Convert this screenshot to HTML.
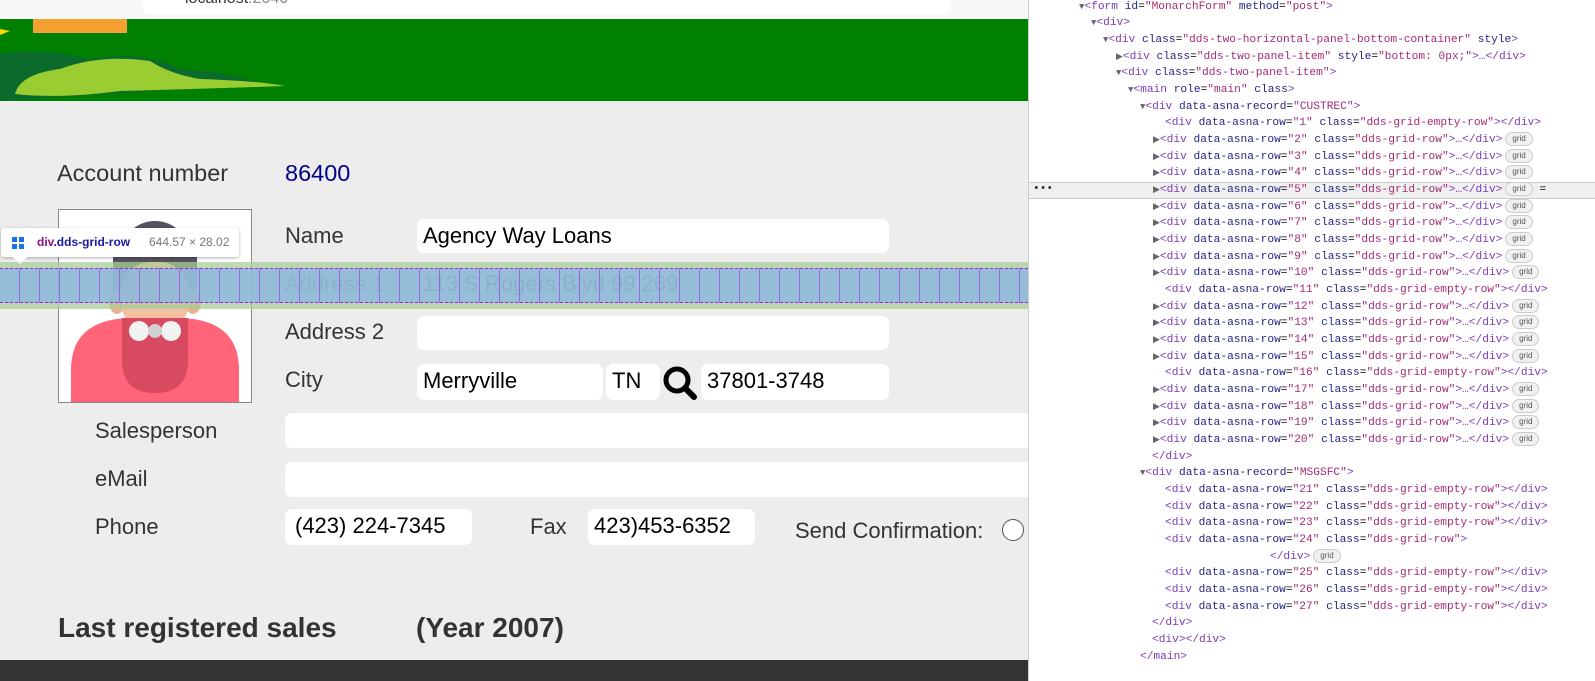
<!DOCTYPE html>
<html><head><meta charset="utf-8"><style>
*{margin:0;padding:0;box-sizing:border-box}
body{width:1595px;height:681px;overflow:hidden;background:#fff;font-family:"Liberation Sans",Arial,sans-serif;position:relative}
.a{position:absolute}
.lbl{position:absolute;font-size:22px;color:#333;line-height:26px}
.in{position:absolute;background:#fff;border-radius:7px;font-size:22px;color:#000;line-height:34px;padding-left:6px;white-space:nowrap}
#dt{position:absolute;left:1028px;top:0;width:567px;height:681px;background:#fff;border-left:1px solid #ccc;font-family:"Liberation Mono",monospace;font-size:11.2px;white-space:pre}
.l{position:absolute;height:17px;line-height:17px}
.t{color:#7b3bb5}.n{color:#252584}.v{color:#a42b72}
.tri{color:#666;font-size:9px}
.g{display:inline-block;border:1px solid #ccc;background:#f1f1f1;border-radius:8px;font-size:8px;color:#555;padding:0 6px;line-height:12px;margin-left:3px;vertical-align:middle;font-family:"Liberation Sans",sans-serif}
</style></head><body>
<div class="a" style="left:0;top:0;width:1028px;height:19px;background:#f7f7f7"></div>
<div class="a" style="left:143px;top:0;width:808px;height:14px;background:#fff;border-radius:0 0 6px 6px"></div>
<div class="a" style="left:185px;top:-10px;font-size:16px;color:#333">localhost<span style="color:#888">:2040</span></div>
<div class="a" style="left:0;top:19px;width:1028px;height:82px;background:#008000;overflow:hidden">
<svg width="300" height="82"><rect x="33" y="0" width="94" height="14" fill="#f4a030"/><path d="M0 35 Q40 28 90 40 Q140 30 180 50 Q240 55 260 65 L0 82Z" fill="#0b6b2c"/><path d="M15 75 Q20 55 60 50 Q100 35 150 42 Q170 55 200 60 Q260 62 285 67 Q200 70 120 72 Q60 80 15 75Z" fill="#9acd32"/><path d="M0 10 L10 12 L0 16Z" fill="#ffd700"/></svg></div>
<div class="a" style="left:0;top:101px;width:1028px;height:559px;background:#ededed"></div>
<div class="a" style="left:0;top:660px;width:1028px;height:21px;background:#333"></div>

<div class="lbl" style="left:57px;top:160px;font-size:23.5px">Account number</div>
<div class="lbl" style="left:285px;top:160px;font-size:23.5px;color:#00008b">86400</div>

<div class="a" style="left:58px;top:209px;width:194px;height:194px;background:#fff;border:1px solid #888;overflow:hidden">
<svg width="194" height="194"><circle cx="96" cy="46" r="35" fill="#55535e"/><rect x="54" y="46" width="84" height="40" fill="#55535e"/><ellipse cx="58" cy="92" rx="8" ry="12" fill="#e8b090"/><ellipse cx="134" cy="92" rx="8" ry="12" fill="#e8b090"/><rect x="62" y="52" width="68" height="70" rx="30" fill="#f2c0a0"/><rect x="80" y="110" width="32" height="30" fill="#ecb08a"/><path d="M12 192 L12 160 Q12 110 70 108 L122 108 Q180 110 180 160 L180 192Z" fill="#ff6478"/><path d="M63 108 L129 108 L129 150 Q129 183 96 183 Q63 183 63 150Z" fill="#d74a60"/><circle cx="80" cy="121" r="10" fill="#f2f2f2"/><circle cx="112" cy="121" r="10" fill="#f2f2f2"/><circle cx="96" cy="121" r="7" fill="#d0d0d0"/></svg></div>

<div class="lbl" style="left:285px;top:223px">Name</div>
<div class="in" style="left:417px;top:219px;width:472px;height:34px">Agency Way Loans</div>
<div class="lbl" style="left:285px;top:271px">Address 1</div>
<div class="in" style="left:417px;top:267px;width:472px;height:34px">113 S Rogers Blvd 99 269</div>
<div class="lbl" style="left:285px;top:319px">Address 2</div>
<div class="in" style="left:417px;top:316px;width:472px;height:34px"></div>
<div class="lbl" style="left:285px;top:367px">City</div>
<div class="in" style="left:417px;top:364px;width:186px;height:36px">Merryville</div>
<div class="in" style="left:606px;top:364px;width:54px;height:36px">TN</div>
<svg class="a" style="left:661px;top:364px" width="38" height="38"><circle cx="16" cy="16" r="11" fill="none" stroke="#000" stroke-width="5"/><path d="M24 24 L33 33" stroke="#000" stroke-width="6" stroke-linecap="round"/></svg>
<div class="in" style="left:701px;top:364px;width:188px;height:36px">37801-3748</div>
<div class="lbl" style="left:95px;top:418px">Salesperson</div>
<div class="in" style="left:285px;top:413px;width:760px;height:35px"></div>
<div class="lbl" style="left:95px;top:466px">eMail</div>
<div class="in" style="left:285px;top:462px;width:760px;height:35px"></div>
<div class="lbl" style="left:95px;top:514px">Phone</div>
<div class="in" style="left:285px;top:509px;width:187px;height:36px;padding-left:10px">(423) 224-7345</div>
<div class="lbl" style="left:530px;top:514px">Fax</div>
<div class="in" style="left:588px;top:509px;width:167px;height:36px">423)453-6352</div>
<div class="lbl" style="left:795px;top:518px">Send Confirmation:</div>
<div class="a" style="left:1002px;top:519px;width:22px;height:22px;border:1.5px solid #555;border-radius:50%;background:#fff"></div>
<div class="a" style="left:58px;top:612px;font-size:28px;font-weight:bold;color:#333">Last registered sales</div>
<div class="a" style="left:416px;top:612px;font-size:28px;font-weight:bold;color:#333">(Year 2007)</div>

<div class="a" style="left:0;top:262px;width:1028px;height:47px;background:rgba(170,205,150,.75)"></div>
<div class="a" style="left:0;top:268px;width:1028px;height:35px;background:rgba(140,182,228,.78);border-top:1px dashed #a020f0;border-bottom:1px dashed #a020f0;background-image:repeating-linear-gradient(90deg,transparent 0 19px,rgba(160,32,240,.55) 19px 20px)"></div>

<div class="a" style="left:1px;top:228px;width:238px;height:29px;background:#fff;border-radius:3px;box-shadow:0 1px 3px rgba(0,0,0,.3);font-size:12px;line-height:29px;white-space:nowrap">
<span style="position:absolute;left:11px;top:9px;width:12px;height:12px;background:linear-gradient(#1a73e8,#1a73e8) 0 0/5px 5px no-repeat,linear-gradient(#1a73e8,#1a73e8) 7px 0/5px 5px no-repeat,linear-gradient(#1a73e8,#1a73e8) 0 7px/5px 5px no-repeat,linear-gradient(#1a73e8,#1a73e8) 7px 7px/5px 5px no-repeat"></span>
<span style="position:absolute;left:36px;font-weight:bold;color:#881280">div<span style="color:#1a1aa6">.dds-grid-row</span></span>
<span style="position:absolute;left:148px;color:#777">644.57 × 28.02</span></div>
<div class="a" style="left:13px;top:257px;width:0;height:0;border-left:7px solid transparent;border-right:7px solid transparent;border-top:7px solid #fff"></div>

<div id="dt">
<div class="a" style="left:0;top:182px;width:567px;height:17px;background:#f0f0f0;border-top:1px solid #ccc;border-bottom:1px solid #ccc"></div>
<div class="l" style="left:4px;top:181px;color:#333">•••</div>
<div class="l" style="left:50px;top:-1px"><span class="tri">▼</span><span class="t">&lt;form </span><span class="n">id</span>=<span class="v">"MonarchForm"</span> <span class="n">method</span>=<span class="v">"post"</span><span class="t">&gt;</span></div>
<div class="l" style="left:62px;top:15px"><span class="tri">▼</span><span class="t">&lt;div&gt;</span></div>
<div class="l" style="left:74px;top:32px"><span class="tri">▼</span><span class="t">&lt;div </span><span class="n">class</span>=<span class="v">"dds-two-horizontal-panel-bottom-container"</span> <span class="n">style</span><span class="t">&gt;</span></div>
<div class="l" style="left:87px;top:49px"><span class="tri">▶</span><span class="t">&lt;div </span><span class="n">class</span>=<span class="v">"dds-two-panel-item"</span> <span class="n">style</span>=<span class="v">"bottom: 0px;"</span><span class="t">&gt;…&lt;/div&gt;</span></div>
<div class="l" style="left:87px;top:65px"><span class="tri">▼</span><span class="t">&lt;div </span><span class="n">class</span>=<span class="v">"dds-two-panel-item"</span><span class="t">&gt;</span></div>
<div class="l" style="left:99px;top:82px"><span class="tri">▼</span><span class="t">&lt;main </span><span class="n">role</span>=<span class="v">"main"</span> <span class="n">class</span><span class="t">&gt;</span></div>
<div class="l" style="left:111px;top:99px"><span class="tri">▼</span><span class="t">&lt;div </span><span class="n">data-asna-record</span>=<span class="v">"CUSTREC"</span><span class="t">&gt;</span></div>
<div class="l" style="left:136px;top:115px"><span class="t">&lt;div </span><span class="n">data-asna-row</span>=<span class="v">"1"</span> <span class="n">class</span>=<span class="v">"dds-grid-empty-row"</span><span class="t">&gt;&lt;/div&gt;</span></div>
<div class="l" style="left:124px;top:132px"><span class="tri">▶</span><span class="t">&lt;div </span><span class="n">data-asna-row</span>=<span class="v">"2"</span> <span class="n">class</span>=<span class="v">"dds-grid-row"</span><span class="t">&gt;…&lt;/div&gt;</span><span class="g">grid</span></div>
<div class="l" style="left:124px;top:149px"><span class="tri">▶</span><span class="t">&lt;div </span><span class="n">data-asna-row</span>=<span class="v">"3"</span> <span class="n">class</span>=<span class="v">"dds-grid-row"</span><span class="t">&gt;…&lt;/div&gt;</span><span class="g">grid</span></div>
<div class="l" style="left:124px;top:165px"><span class="tri">▶</span><span class="t">&lt;div </span><span class="n">data-asna-row</span>=<span class="v">"4"</span> <span class="n">class</span>=<span class="v">"dds-grid-row"</span><span class="t">&gt;…&lt;/div&gt;</span><span class="g">grid</span></div>
<div class="l" style="left:124px;top:182px"><span class="tri">▶</span><span class="t">&lt;div </span><span class="n">data-asna-row</span>=<span class="v">"5"</span> <span class="n">class</span>=<span class="v">"dds-grid-row"</span><span class="t">&gt;…&lt;/div&gt;</span><span class="g">grid</span> =</div>
<div class="l" style="left:124px;top:199px"><span class="tri">▶</span><span class="t">&lt;div </span><span class="n">data-asna-row</span>=<span class="v">"6"</span> <span class="n">class</span>=<span class="v">"dds-grid-row"</span><span class="t">&gt;…&lt;/div&gt;</span><span class="g">grid</span></div>
<div class="l" style="left:124px;top:215px"><span class="tri">▶</span><span class="t">&lt;div </span><span class="n">data-asna-row</span>=<span class="v">"7"</span> <span class="n">class</span>=<span class="v">"dds-grid-row"</span><span class="t">&gt;…&lt;/div&gt;</span><span class="g">grid</span></div>
<div class="l" style="left:124px;top:232px"><span class="tri">▶</span><span class="t">&lt;div </span><span class="n">data-asna-row</span>=<span class="v">"8"</span> <span class="n">class</span>=<span class="v">"dds-grid-row"</span><span class="t">&gt;…&lt;/div&gt;</span><span class="g">grid</span></div>
<div class="l" style="left:124px;top:249px"><span class="tri">▶</span><span class="t">&lt;div </span><span class="n">data-asna-row</span>=<span class="v">"9"</span> <span class="n">class</span>=<span class="v">"dds-grid-row"</span><span class="t">&gt;…&lt;/div&gt;</span><span class="g">grid</span></div>
<div class="l" style="left:124px;top:265px"><span class="tri">▶</span><span class="t">&lt;div </span><span class="n">data-asna-row</span>=<span class="v">"10"</span> <span class="n">class</span>=<span class="v">"dds-grid-row"</span><span class="t">&gt;…&lt;/div&gt;</span><span class="g">grid</span></div>
<div class="l" style="left:136px;top:282px"><span class="t">&lt;div </span><span class="n">data-asna-row</span>=<span class="v">"11"</span> <span class="n">class</span>=<span class="v">"dds-grid-empty-row"</span><span class="t">&gt;&lt;/div&gt;</span></div>
<div class="l" style="left:124px;top:299px"><span class="tri">▶</span><span class="t">&lt;div </span><span class="n">data-asna-row</span>=<span class="v">"12"</span> <span class="n">class</span>=<span class="v">"dds-grid-row"</span><span class="t">&gt;…&lt;/div&gt;</span><span class="g">grid</span></div>
<div class="l" style="left:124px;top:315px"><span class="tri">▶</span><span class="t">&lt;div </span><span class="n">data-asna-row</span>=<span class="v">"13"</span> <span class="n">class</span>=<span class="v">"dds-grid-row"</span><span class="t">&gt;…&lt;/div&gt;</span><span class="g">grid</span></div>
<div class="l" style="left:124px;top:332px"><span class="tri">▶</span><span class="t">&lt;div </span><span class="n">data-asna-row</span>=<span class="v">"14"</span> <span class="n">class</span>=<span class="v">"dds-grid-row"</span><span class="t">&gt;…&lt;/div&gt;</span><span class="g">grid</span></div>
<div class="l" style="left:124px;top:349px"><span class="tri">▶</span><span class="t">&lt;div </span><span class="n">data-asna-row</span>=<span class="v">"15"</span> <span class="n">class</span>=<span class="v">"dds-grid-row"</span><span class="t">&gt;…&lt;/div&gt;</span><span class="g">grid</span></div>
<div class="l" style="left:136px;top:365px"><span class="t">&lt;div </span><span class="n">data-asna-row</span>=<span class="v">"16"</span> <span class="n">class</span>=<span class="v">"dds-grid-empty-row"</span><span class="t">&gt;&lt;/div&gt;</span></div>
<div class="l" style="left:124px;top:382px"><span class="tri">▶</span><span class="t">&lt;div </span><span class="n">data-asna-row</span>=<span class="v">"17"</span> <span class="n">class</span>=<span class="v">"dds-grid-row"</span><span class="t">&gt;…&lt;/div&gt;</span><span class="g">grid</span></div>
<div class="l" style="left:124px;top:399px"><span class="tri">▶</span><span class="t">&lt;div </span><span class="n">data-asna-row</span>=<span class="v">"18"</span> <span class="n">class</span>=<span class="v">"dds-grid-row"</span><span class="t">&gt;…&lt;/div&gt;</span><span class="g">grid</span></div>
<div class="l" style="left:124px;top:415px"><span class="tri">▶</span><span class="t">&lt;div </span><span class="n">data-asna-row</span>=<span class="v">"19"</span> <span class="n">class</span>=<span class="v">"dds-grid-row"</span><span class="t">&gt;…&lt;/div&gt;</span><span class="g">grid</span></div>
<div class="l" style="left:124px;top:432px"><span class="tri">▶</span><span class="t">&lt;div </span><span class="n">data-asna-row</span>=<span class="v">"20"</span> <span class="n">class</span>=<span class="v">"dds-grid-row"</span><span class="t">&gt;…&lt;/div&gt;</span><span class="g">grid</span></div>
<div class="l" style="left:123px;top:449px"><span class="t">&lt;/div&gt;</span></div>
<div class="l" style="left:111px;top:465px"><span class="tri">▼</span><span class="t">&lt;div </span><span class="n">data-asna-record</span>=<span class="v">"MSGSFC"</span><span class="t">&gt;</span></div>
<div class="l" style="left:136px;top:482px"><span class="t">&lt;div </span><span class="n">data-asna-row</span>=<span class="v">"21"</span> <span class="n">class</span>=<span class="v">"dds-grid-empty-row"</span><span class="t">&gt;&lt;/div&gt;</span></div>
<div class="l" style="left:136px;top:499px"><span class="t">&lt;div </span><span class="n">data-asna-row</span>=<span class="v">"22"</span> <span class="n">class</span>=<span class="v">"dds-grid-empty-row"</span><span class="t">&gt;&lt;/div&gt;</span></div>
<div class="l" style="left:136px;top:515px"><span class="t">&lt;div </span><span class="n">data-asna-row</span>=<span class="v">"23"</span> <span class="n">class</span>=<span class="v">"dds-grid-empty-row"</span><span class="t">&gt;&lt;/div&gt;</span></div>
<div class="l" style="left:136px;top:532px"><span class="t">&lt;div </span><span class="n">data-asna-row</span>=<span class="v">"24"</span> <span class="n">class</span>=<span class="v">"dds-grid-row"</span><span class="t">&gt;</span></div>
<div class="l" style="left:241px;top:549px"><span class="t">&lt;/div&gt;</span><span class="g">grid</span></div>
<div class="l" style="left:136px;top:565px"><span class="t">&lt;div </span><span class="n">data-asna-row</span>=<span class="v">"25"</span> <span class="n">class</span>=<span class="v">"dds-grid-empty-row"</span><span class="t">&gt;&lt;/div&gt;</span></div>
<div class="l" style="left:136px;top:582px"><span class="t">&lt;div </span><span class="n">data-asna-row</span>=<span class="v">"26"</span> <span class="n">class</span>=<span class="v">"dds-grid-empty-row"</span><span class="t">&gt;&lt;/div&gt;</span></div>
<div class="l" style="left:136px;top:599px"><span class="t">&lt;div </span><span class="n">data-asna-row</span>=<span class="v">"27"</span> <span class="n">class</span>=<span class="v">"dds-grid-empty-row"</span><span class="t">&gt;&lt;/div&gt;</span></div>
<div class="l" style="left:123px;top:615px"><span class="t">&lt;/div&gt;</span></div>
<div class="l" style="left:123px;top:632px"><span class="t">&lt;div&gt;&lt;/div&gt;</span></div>
<div class="l" style="left:111px;top:649px"><span class="t">&lt;/main&gt;</span></div>
</div>
</body></html>
